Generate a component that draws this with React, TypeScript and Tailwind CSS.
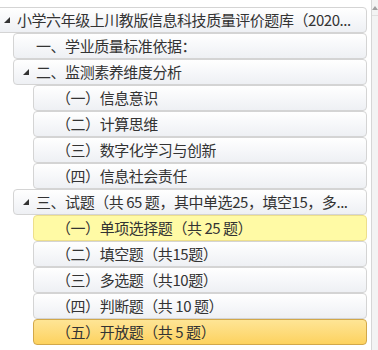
import React from 'react';

type Item = {
  label: string;
  level: 0 | 1 | 2;
  open?: boolean;
  tone?: 'plain' | 'hover' | 'selected';
};

// labels are cut the way the tree control shows them
const items: Item[] = [
  { label: '小学六年级上川教版信息科技质量评价题库（2020...', level: 0, open: true },
  { label: '一、学业质量标准依据：', level: 1 },
  { label: '二、监测素养维度分析', level: 1, open: true },
  { label: '（一）信息意识', level: 2 },
  { label: '（二）计算思维', level: 2 },
  { label: '（三）数字化学习与创新', level: 2 },
  { label: '（四）信息社会责任', level: 2 },
  { label: '三、试题（共 65 题，其中单选25，填空15，多...', level: 1, open: true },
  { label: '（一）单项选择题（共 25 题）', level: 2, tone: 'hover' },
  { label: '（二）填空题（共15题）', level: 2 },
  { label: '（三）多选题（共10题）', level: 2 },
  { label: '（四）判断题（共 10 题）', level: 2 },
  { label: '（五）开放题（共 5 题）', level: 2, tone: 'selected' },
];

function Arrow() {
  return (
    <svg width="6" height="6" viewBox="0 0 6 6" className="shrink-0">
      <path d="M6 0 L6 6 L0 6 Z" fill="#333" />
    </svg>
  );
}

function Row({ item }: { item: Item }) {
  const indent =
    item.level === 0 ? 'ml-[-6px]' : item.level === 1 ? 'ml-[13px]' : 'ml-[33px]';
  const tone =
    item.tone === 'selected'
      ? 'border-[#d2a84a] bg-gradient-to-b from-[#fee595] to-[#fdd25e]'
      : item.tone === 'hover'
        ? 'border-[#eddf8c] bg-[#fffaa5]'
        : 'border-[#d4d4d4] bg-gradient-to-b from-white to-[#eef0f4]';

  return (
    <div
      className={`${indent} ${tone} flex h-[26px] items-center rounded-[4px] border pl-[9px] pr-[1px] text-[15px] leading-[24px] text-[#333]`}
    >
      <span className="flex w-[6px] shrink-0 items-center">{item.open && <Arrow />}</span>
      <span className="ml-[7px] overflow-hidden whitespace-nowrap tracking-[-0.45px]">
        {item.label}
      </span>
    </div>
  );
}

export default function App() {
  return (
    <div
      className="flex h-[350px] w-[378px] overflow-hidden bg-white"
      style={{ fontFamily: '"Noto Sans CJK SC", "Noto Sans", sans-serif' }}
    >
      <div className="w-[371px] shrink-0 overflow-hidden pr-[4px] pt-[7px]">
        {items.map((item) => (
          <Row key={item.label} item={item} />
        ))}
      </div>

      {/* Scrollbar edge */}
      <div className="h-full w-[7px] border-l border-[#d6d6d6] bg-[#f3f3f3]">
        <div className="flex h-[16px] items-center justify-center border-b border-[#e0e0e0]">
          <svg width="6" height="4" viewBox="0 0 6 4">
            <path d="M0 4 L3 0 L6 4 Z" fill="#a0a0a0" />
          </svg>
        </div>
      </div>
    </div>
  );
}
